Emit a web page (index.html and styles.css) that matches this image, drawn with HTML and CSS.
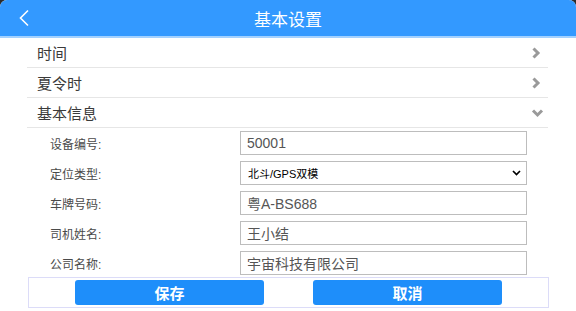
FILE: index.html
```html
<!DOCTYPE html>
<html>
<head>
    <meta charset="utf-8">
    <title>基本设置</title>
    <link rel="stylesheet" href="styles.css">
</head>
<body>
    <div class="page">
        <div class="header">
            <a class="back" href="#">
                <svg width="12" height="18" viewBox="0 0 12 18">
                    <path d="M10 1.5 L2.5 9 L10 16.5" fill="none" stroke="#fff" stroke-width="1.6"/>
                </svg>
            </a>
            <div class="title">基本设置</div>
            <div></div>
        </div>
        <div class="content">
            <div class="menu-row">
                <span>时间</span>
                <svg class="arrow" width="10" height="14" viewBox="0 0 10 14">
                    <path d="M2.5 2.5 L7 7 L2.5 11.5" fill="none" stroke="#9a9a9a" stroke-width="3"/>
                </svg>
            </div>
            <div class="menu-row">
                <span>夏令时</span>
                <svg class="arrow" width="10" height="14" viewBox="0 0 10 14">
                    <path d="M2.5 2.5 L7 7 L2.5 11.5" fill="none" stroke="#9a9a9a" stroke-width="3"/>
                </svg>
            </div>
            <div class="menu-row">
                <span>基本信息</span>
                <svg class="arrow down" width="13" height="10" viewBox="0 0 13 10">
                    <path d="M2 2.5 L6.5 7 L11 2.5" fill="none" stroke="#9a9a9a" stroke-width="3"/>
                </svg>
            </div>
            <div class="form">
                <div class="form-row">
                    <label>设备编号:</label>
                    <input class="field" type="text" value="50001">
                </div>
                <div class="form-row">
                    <label>定位类型:</label>
                    <div class="field select">
                        <span>北斗/GPS双模</span>
                        <svg width="9" height="6" viewBox="0 0 9 6">
                            <path d="M1 1 L4.5 4.5 L8 1" fill="none" stroke="#000" stroke-width="1.7"/>
                        </svg>
                    </div>
                </div>
                <div class="form-row">
                    <label>车牌号码:</label>
                    <input class="field" type="text" value="粤A-BS688">
                </div>
                <div class="form-row">
                    <label>司机姓名:</label>
                    <input class="field" type="text" value="王小结">
                </div>
                <div class="form-row">
                    <label>公司名称:</label>
                    <input class="field" type="text" value="宇宙科技有限公司">
                </div>
            </div>
            <div class="actions">
                <button class="btn">保存</button>
                <button class="btn">取消</button>
            </div>
        </div>
    </div>
</body>
</html>
```

FILE: styles.css
```css
html, body {
    margin: 0;
    padding: 0;
    background: #2b2b2b;
}
body {
    font-family: "Liberation Sans", "Noto Sans CJK SC", sans-serif;
}
.page {
    width: 576px;
    height: 311px;
    background: #fff;
    border-radius: 7px 7px 0 0;
    overflow: hidden;
}
.header {
    height: 36px;
    background: #3399ff;
    border-bottom: 2px solid #a3d1ff;
    display: grid;
    grid-template-columns: 1fr auto 1fr;
    align-items: center;
}
.back {
    display: flex;
    padding-left: 18px;
}
.title {
    color: #fff;
    font-size: 17px;
    font-family: "Noto Sans CJK SC", sans-serif;
}
.content {
    margin: 0 28px 0 27px;
}
.menu-row {
    height: 29px;
    border-bottom: 1px solid #e6e6e6;
    display: flex;
    align-items: center;
    justify-content: space-between;
    padding: 0 7px 0 10px;
    font-size: 15px;
    color: #3a3a3a;
    font-family: "Noto Sans CJK SC", sans-serif;
}
.arrow.down {
    margin-right: -3px;
}
.form {
    padding-top: 3px;
    display: flex;
    flex-direction: column;
    gap: 6px;
}
.form-row {
    display: flex;
    align-items: center;
    height: 24px;
}
.form-row label {
    width: 190px;
    padding-left: 23px;
    font-size: 12px;
    color: #4a4a4a;
}
.field {
    box-sizing: border-box;
    width: 287px;
    height: 24px;
    margin: 0;
    border: 1px solid #bdbdbd;
    padding: 0 6px;
    font-family: "Liberation Sans", "Noto Sans CJK SC", sans-serif;
    font-size: 14px;
    color: #555;
    background: #fff;
    outline: none;
}
.select {
    display: flex;
    align-items: center;
    justify-content: space-between;
    font-size: 11px;
    color: #000;
    padding: 0 5px 0 7px;
}
.actions {
    margin: 2px -1px 0 1px;
    height: 29px;
    border: 1px solid #dcdcf8;
    display: flex;
    justify-content: center;
    align-items: center;
    gap: 49px;
}
.btn {
    width: 189px;
    height: 25px;
    border: none;
    border-radius: 3px;
    background: #1e8efa;
    color: #fff;
    font-size: 15px;
    font-weight: bold;
    font-family: "Noto Sans CJK SC", sans-serif;
    cursor: pointer;
}
```
